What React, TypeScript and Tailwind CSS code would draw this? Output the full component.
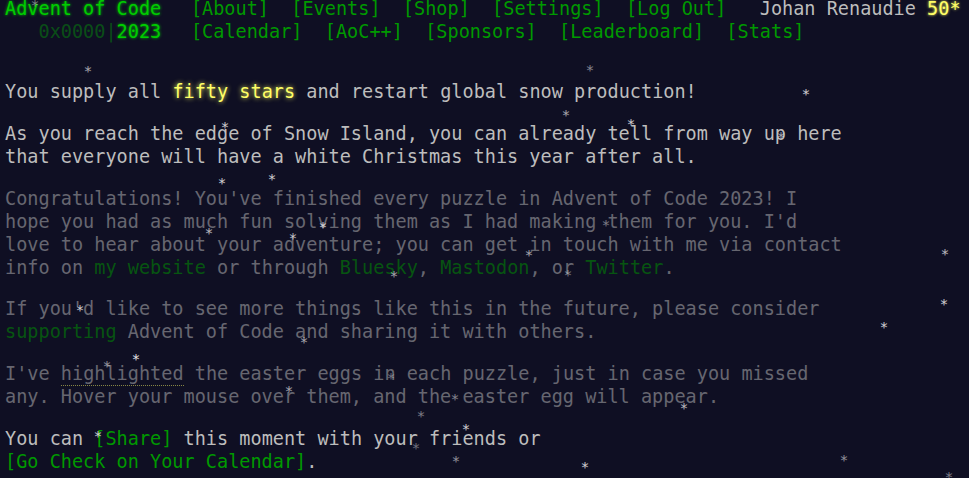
import React from "react";

// snowflakes: [x, y, brightness]
const flakes: [number, number, number][] = [
  [35, 2, 0.5],
  [88, 68, 0.7],
  [590, 67, 0.55],
  [806, 91, 0.9],
  [566, 112, 0.7],
  [631, 121, 0.9],
  [225, 124, 0.9],
  [781, 134, 0.7],
  [222, 180, 0.9],
  [272, 176, 0.9],
  [209, 230, 0.8],
  [293, 235, 0.8],
  [323, 224, 0.9],
  [606, 222, 0.5],
  [529, 252, 0.7],
  [945, 251, 0.8],
  [568, 272, 0.5],
  [394, 273, 0.7],
  [80, 307, 0.9],
  [304, 339, 0.7],
  [944, 301, 0.9],
  [884, 324, 0.9],
  [136, 356, 1],
  [107, 363, 0.6],
  [391, 375, 0.45],
  [289, 388, 0.7],
  [455, 396, 0.55],
  [684, 405, 0.8],
  [421, 413, 0.5],
  [466, 426, 0.9],
  [98, 433, 0.9],
  [416, 445, 0.45],
  [456, 458, 0.6],
  [844, 457, 0.6],
  [585, 464, 0.9],
  [949, 474, 0.5],
];

function NavLink({ children }: { children: React.ReactNode }) {
  return <li className="inline-block px-[0.6em] text-[#009900]">[{children}]</li>;
}

export default function App() {
  return (
    <div
      className="relative min-h-[478px] overflow-hidden bg-[#0f0f23] px-[5px] text-[18.55px] leading-[23px] text-[#bdbdbd]"
      style={{ fontFamily: '"DejaVu Sans Mono", "Liberation Mono", monospace' }}
    >
      {/* Header */}
      <header className="-mt-[3px] mb-[37px] whitespace-nowrap">
        <div>
          <h1 className="inline-block pr-[1em] text-[#00cc00] [text-shadow:0_0_3px_#00cc00]">
            Advent of Code
          </h1>
          <nav className="inline-block">
            <ul className="inline-block">
              <NavLink>About</NavLink>
              <NavLink>Events</NavLink>
              <NavLink>Shop</NavLink>
              <NavLink>Settings</NavLink>
              <NavLink>Log Out</NavLink>
            </ul>
          </nav>
          <div className="inline-block pl-[1.2em]">
            Johan Renaudie{" "}
            <span className="text-[#ffff66] [text-shadow:0_0_3px_#ffff66]">50*</span>
          </div>
        </div>
        <div>
          <h1 className="inline-block pr-[1em] text-[#00cc00]">
            <span className="whitespace-pre opacity-[0.33]">{"   0x0000|"}</span>
            <span className="[text-shadow:0_0_3px_#00cc00]">2023</span>
          </h1>
          <nav className="inline-block">
            <ul className="inline-block">
              <NavLink>Calendar</NavLink>
              <NavLink>AoC++</NavLink>
              <NavLink>Sponsors</NavLink>
              <NavLink>Leaderboard</NavLink>
              <NavLink>Stats</NavLink>
            </ul>
          </nav>
        </div>
      </header>

      {/* Main */}
      <main className="w-[850px]">
        <p className="my-[18.8px]">
          You supply all{" "}
          <span className="text-[#ffff66] [text-shadow:0_0_5px_#ffff66]">fifty stars</span>{" "}
          and restart global snow production!
        </p>
        <p className="my-[18.8px]">
          As you reach the edge of Snow Island, you can already tell from way up here
          <br />
          that everyone will have a white Christmas this year after all.
        </p>
        <p className="my-[18.8px] opacity-50">
          Congratulations! You've finished every puzzle in Advent of Code 2023! I
          <br />
          hope you had as much fun solving them as I had making them for you. I'd
          <br />
          love to hear about your adventure; you can get in touch with me via contact
          <br />
          info on <span className="text-[#009900]">my website</span> or through{" "}
          <span className="text-[#009900]">Bluesky</span>,{" "}
          <span className="text-[#009900]">Mastodon</span>, or{" "}
          <span className="text-[#009900]">Twitter</span>.
        </p>
        <p className="my-[18.8px] opacity-50">
          If you'd like to see more things like this in the future, please consider
          <br />
          <span className="text-[#009900]">supporting</span> Advent of Code and sharing it
          with others.
        </p>
        <p className="my-[18.8px] opacity-50">
          I've{" "}
          <span className="border-b border-dotted border-[#ffff66] pb-[1px]">highlighted</span>{" "}
          the easter eggs in each puzzle, just in case you missed
          <br />
          any. Hover your mouse over them, and the easter egg will appear.
        </p>
        <p className="my-[18.8px]">
          You can <span className="text-[#009900]">[Share]</span> this moment with your
          friends or
          <br />
          <span className="text-[#009900]">[Go Check on Your Calendar]</span>.
        </p>
      </main>

      {/* Snow */}
      {flakes.map(([x, y, b], i) => (
        <span
          key={i}
          className="pointer-events-none absolute -translate-x-1/2 -translate-y-1/2 text-[14px] leading-none text-[#e6e6e6]"
          style={{ left: x, top: y + 3, opacity: b }}
        >
          *
        </span>
      ))}
    </div>
  );
}
